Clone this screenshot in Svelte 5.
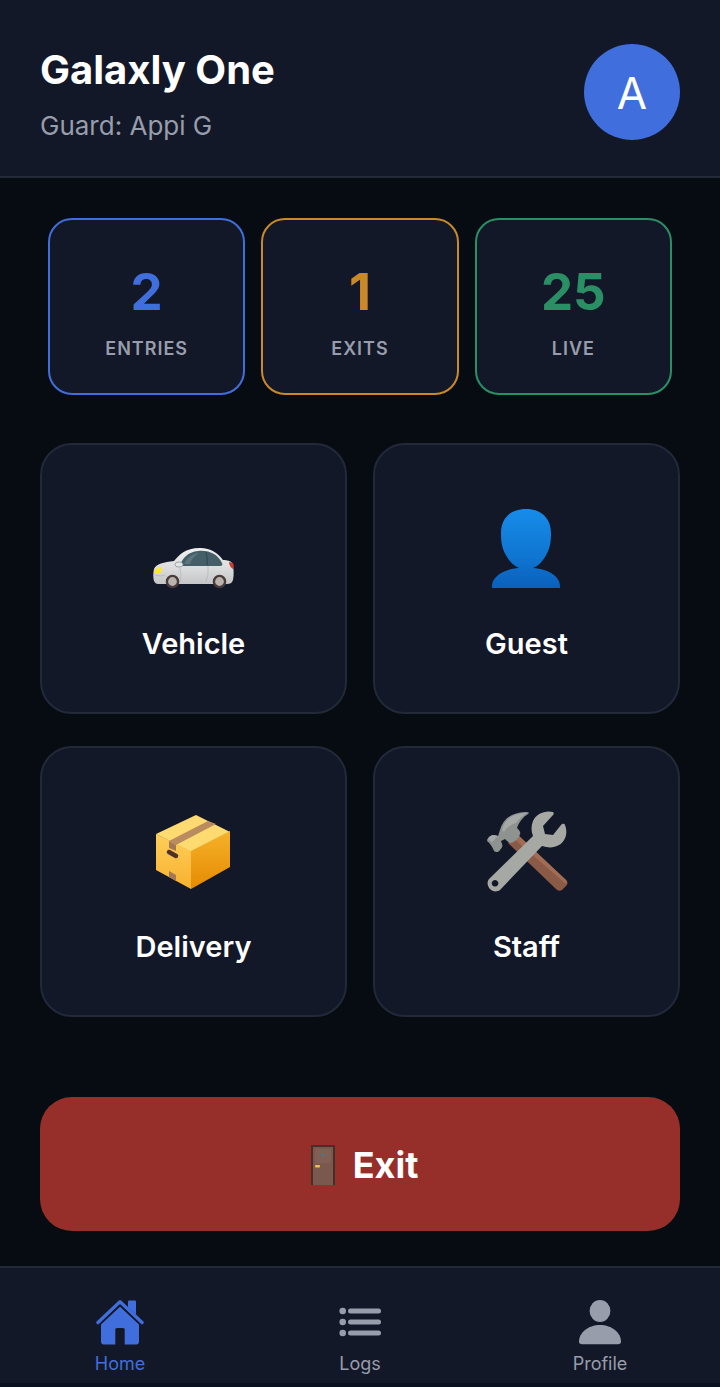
<script lang="ts">
  type Stat = { label: string; value: number; tone: string };

  const society = 'Galaxly One';
  const guard = 'Appi G';

  const stats: Stat[] = [
    { label: 'Entries', value: 2, tone: 'blue' },
    { label: 'Exits', value: 1, tone: 'amber' },
    { label: 'Live', value: 25, tone: 'green' },
  ];

  const actions = ['Vehicle', 'Guest', 'Delivery', 'Staff'];
  const tabs = ['Home', 'Logs', 'Profile'];

  let current = $state('Home');
</script>

{#snippet actionIcon(name: string)}
  <svg class="action-icon" viewBox="1 0 80 80" aria-hidden="true">
    {#if name === 'Vehicle'}
      <defs>
        <linearGradient id="car-body" x1="0" y1="0" x2="0" y2="1">
          <stop offset="0" stop-color="#f0f0f0" />
          <stop offset="0.55" stop-color="#dcdddd" />
          <stop offset="1" stop-color="#c4c5c6" />
        </linearGradient>
      </defs>
      <path fill="url(#car-body)" d="M1 73c-1-3-1-8 0-12 2-5 10-7 20-8 5-6 11-13 26-13 11 0 18 5 23 12 4 0 8 1 9 3 2 5 2 12 1 17-1 3-3 4-6 4H5c-2 0-3-1-4-3z" />
      <path fill="#455f68" d="M27 58c2-8 8-14 18-15 12-1 20 4 24 12 1 2 0 3-2 3z" />
      <path fill="#6d858b" d="M31 56c3-6 9-11 15-11-5 3-8 7-9 11z" opacity="0.6" />
      <path fill="none" stroke="#2d444c" d="M53 44q2 7 1 13" />
      <path fill="none" stroke="#b1b3b5" stroke-width="0.7" d="M27 60q2 8 0 14m28-16q1 8-2 16M2 67q6 2 10 0" />
      <ellipse cx="26" cy="56.5" rx="4" ry="2.6" fill="#e3e4e5" stroke="#8d9497" stroke-width="0.8" />
      <path fill="#ffe91f" d="M3 61l5-2c1 2 0 6-2 7H2c-1-2 0-4 1-5z" />
      <path fill="#c93b32" d="M76 54l4 1c1 2 1 5 0 6-2-1-4-4-4-7z" />
      <circle cx="19.5" cy="73.5" r="5.6" fill="#b9b3b0" stroke="#4a3b3a" stroke-width="2.4" />
      <circle cx="66.5" cy="73.5" r="5.6" fill="#b9b3b0" stroke="#4a3b3a" stroke-width="2.4" />
    {:else if name === 'Guest'}
      <defs>
        <linearGradient id="bust" x1="0" y1="0" x2="0" y2="80" gradientUnits="userSpaceOnUse">
          <stop offset="0" stop-color="#178cea" />
          <stop offset="0.6" stop-color="#0f76d2" />
          <stop offset="1" stop-color="#0a60bb" />
        </linearGradient>
      </defs>
      <path fill="url(#bust)" d="M40 1c16 0 25 10 25 24 0 9-1 16-6 24-3 5-7 9-12 11 16 1 27 9 27 18v2H6v-2c0-9 11-17 27-18-5-2-9-6-12-11-5-8-6-15-6-24C15 11 24 1 40 1z" />
    {:else if name === 'Delivery'}
      <defs>
        <linearGradient id="box-left" x1="0" y1="0" x2="0" y2="1">
          <stop offset="0" stop-color="#ffce59" />
          <stop offset="1" stop-color="#f8b12f" />
        </linearGradient>
        <linearGradient id="box-right" x1="0" y1="0" x2="0" y2="1">
          <stop offset="0" stop-color="#f6b22b" />
          <stop offset="1" stop-color="#e58a02" />
        </linearGradient>
      </defs>
      <path fill="#fddb70" d="M43 4l34 17-39 20L3 23z" />
      <path fill="url(#box-left)" d="M3 23l35 17v38L3 59z" />
      <path fill="url(#box-right)" d="M38 40l39-20v36L38 78z" />
      <path fill="#b98b5e" d="M16 30l39-20 8 3-40 21z" />
      <path fill="#a37857" d="M16 30l7 4v6l-7-3zM16 60l7 4v6l-7-4z" />
      <path stroke="#4d302b" stroke-width="4.5" stroke-linecap="round" d="M16 41l7 4" />
    {:else}
      <path fill="#8b5a46" d="M31 23l49 46c2 2 2 4 0 6l-4 4c-2 1-4 1-6-1L22 32z" />
      <path fill="#a06c54" d="M31 23l49 46c1 1 1 3 0 4L27 27z" />
      <path fill="#8f9390" d="M43 2c-1-2-10-1-17 2-6 3-10 8-12 15l-2 6-4-1c-3 0-6 2-7 5 0 2 2 2 3 4 2 2 3 5 4 7 2 2 5 1 6-1 2-2 3-4 2-6l-1-3 4-2c2 2 4 4 6 4 4-1 8-5 9-9 1-2-1-4-3-6 2-6 6-11 11-14z" />
      <path fill="#a5aaa7" d="M41 2c-6 0-11 1-16 4-5 3-8 8-9 13l2 2c3-6 9-8 12-9 3-4 7-8 11-10z" />
      <path fill="#a5aaa7" d="M12 25l-4-1c-3 0-5 2-6 4l4 3z" />
      <path
        fill="#a5a8a3"
        fill-rule="evenodd"
        d="M67 1c-8-2-17 2-20 9-2 5-2 10 0 15L3 68c-5 7 4 16 11 11l42-44c6 2 12 2 17-1 7-4 9-13 6-20-1-2-3-1-4 0l-8 10-8-1-2-8 10-11c1-1 1-2 0-3zM9 69a3.3 3.3 0 1 0 .1 0z"
      />
    {/if}
  </svg>
{/snippet}

{#snippet tabIcon(name: string)}
  <svg class="tab-icon" viewBox="0 0 48 48" fill="currentColor" aria-hidden="true">
    {#if name === 'Home'}
      <path d="M32 3.5q0-1 1-1h6q1 0 1 1v13l-8-7z" />
      <path fill="none" stroke="currentColor" stroke-width="3.4" stroke-linecap="round" stroke-linejoin="round" d="M2 24.5L24 3.8l22 20.7" />
      <path d="M24 8.5L43 26v17.5q0 3-3 3H28.7V31.5q0-1.5-1.5-1.5h-6.4q-1.5 0-1.5 1.5v15H8q-3 0-3-3V26z" />
      <path fill="none" stroke="var(--surface)" stroke-width="1.4" d="M4 26.4L24 7.5l20 18.9" />
    {:else if name === 'Logs'}
      {#each [13, 24, 35] as y}
        <circle cx="6.7" cy={y} r="3.3" />
        <rect x="12" y={y - 2.5} width="33" height="5" rx="2.5" />
      {/each}
    {:else}
      <ellipse cx="24" cy="13" rx="10.4" ry="11" />
      <path d="M24 27c12 0 21 8 21 16.5q0 2.8-3 2.8H6q-3 0-3-2.8C3 35 12 27 24 27z" />
    {/if}
  </svg>
{/snippet}

<div class="screen">
  <header>
    <div>
      <h1>{society}</h1>
      <p>Guard: {guard}</p>
    </div>
    <button class="avatar" aria-label="Account">{guard[0]}</button>
  </header>

  <main>
    <dl class="stats">
      {#each stats as stat}
        <div class="stat {stat.tone}">
          <dd>{stat.value}</dd>
          <dt>{stat.label}</dt>
        </div>
      {/each}
    </dl>

    <div class="actions">
      {#each actions as action}
        <button class="action">
          {@render actionIcon(action)}
          <span>{action}</span>
        </button>
      {/each}
    </div>

    <button class="exit">
      <svg viewBox="0 0 42 42" aria-hidden="true">
        <path fill="#482d29" d="M9 1h24v40H9z" />
        <path fill="#79594d" d="M11 3h20v38H11z" />
        <path fill="#806054" d="M13 5h16v14H13z" />
        <circle cx="21" cy="11" r="1.7" fill="#4d7689" />
        <rect x="13" y="21" width="5" height="2.4" rx="1" fill="#efbd55" />
      </svg>
      Exit
    </button>
  </main>

  <nav>
    {#each tabs as tab}
      <a href="#{tab.toLowerCase()}" class:active={current === tab} onclick={() => (current = tab)}>
        {@render tabIcon(tab)}
        {tab}
      </a>
    {/each}
  </nav>
</div>

<style>
  :global(body) {
    background: #070c12;
  }

  .screen {
    --surface: #131828;
    --line: #222938;
    --muted: #989dab;
    --blue: #406edc;
    min-height: 100vh;
    box-sizing: border-box;
    border-bottom: 4px solid #0b1020;
    display: flex;
    flex-direction: column;
    color: #fff;
    font-family: Inter, 'Liberation Sans', sans-serif;
  }

  button {
    font: inherit;
    color: inherit;
    cursor: pointer;
  }

  header {
    display: flex;
    align-items: center;
    justify-content: space-between;
    padding: 44px 40px 36px;
    background: var(--surface);
    border-bottom: 2px solid var(--line);
  }

  h1 {
    margin: 0 0 16px;
    font-size: 40px;
    line-height: 52px;
    font-weight: 700;
  }

  header p {
    margin: 0;
    color: var(--muted);
    font-size: 26px;
    line-height: 28px;
  }

  .avatar {
    width: 96px;
    height: 96px;
    padding: 2px 0 0;
    border: 0;
    border-radius: 50%;
    background: var(--blue);
    font-size: 44px;
  }

  main {
    flex: 1;
    padding: 40px 40px 35px;
  }

  .stats {
    display: grid;
    grid-template-columns: repeat(3, 1fr);
    gap: 16px;
    margin: 0 8px 48px;
  }

  .stat {
    display: flex;
    flex-direction: column;
    gap: 15px;
    padding: 42px 8px 32px;
    border: 2px solid currentColor;
    border-radius: 24px;
    background: var(--surface);
    text-align: center;
  }

  .blue { color: var(--blue); }
  .amber { color: #ca8829; }
  .green { color: #2b8f65; }

  .stat dd {
    margin: 0;
    font-size: 51px;
    line-height: 60px;
    font-weight: 700;
  }

  .stat dt {
    color: var(--muted);
    font-size: 18px;
    line-height: 24px;
    font-weight: 600;
    letter-spacing: 1px;
    text-transform: uppercase;
  }

  .actions {
    display: grid;
    grid-template-columns: repeat(2, 1fr);
    gap: 32px 26px;
    margin-bottom: 80px;
  }

  .action {
    display: flex;
    flex-direction: column;
    align-items: center;
    gap: 36px;
    padding: 63px 16px 48px;
    border: 2px solid var(--line);
    border-radius: 32px;
    background: var(--surface);
    font-size: 29px;
    line-height: 40px;
    font-weight: 600;
  }

  .action-icon {
    width: 80px;
    height: 80px;
    fill: none;
    overflow: visible;
  }

  .exit {
    display: flex;
    align-items: center;
    justify-content: center;
    gap: 9px;
    width: 100%;
    padding: 44px 16px 42px;
    border: 0;
    border-radius: 32px;
    background: #962e2a;
    font-size: 36px;
    line-height: 48px;
    font-weight: 700;
  }

  .exit svg {
    width: 42px;
    height: 42px;
  }

  nav {
    display: grid;
    grid-template-columns: repeat(3, 1fr);
    padding: 30px 0 8px;
    background: var(--surface);
    border-top: 2px solid var(--line);
  }

  nav a {
    display: flex;
    flex-direction: column;
    align-items: center;
    gap: 7px;
    color: var(--muted);
    font-size: 18px;
    line-height: 22px;
    text-decoration: none;
  }

  nav a.active {
    color: var(--blue);
  }

  .tab-icon {
    width: 48px;
    height: 48px;
  }
</style>
